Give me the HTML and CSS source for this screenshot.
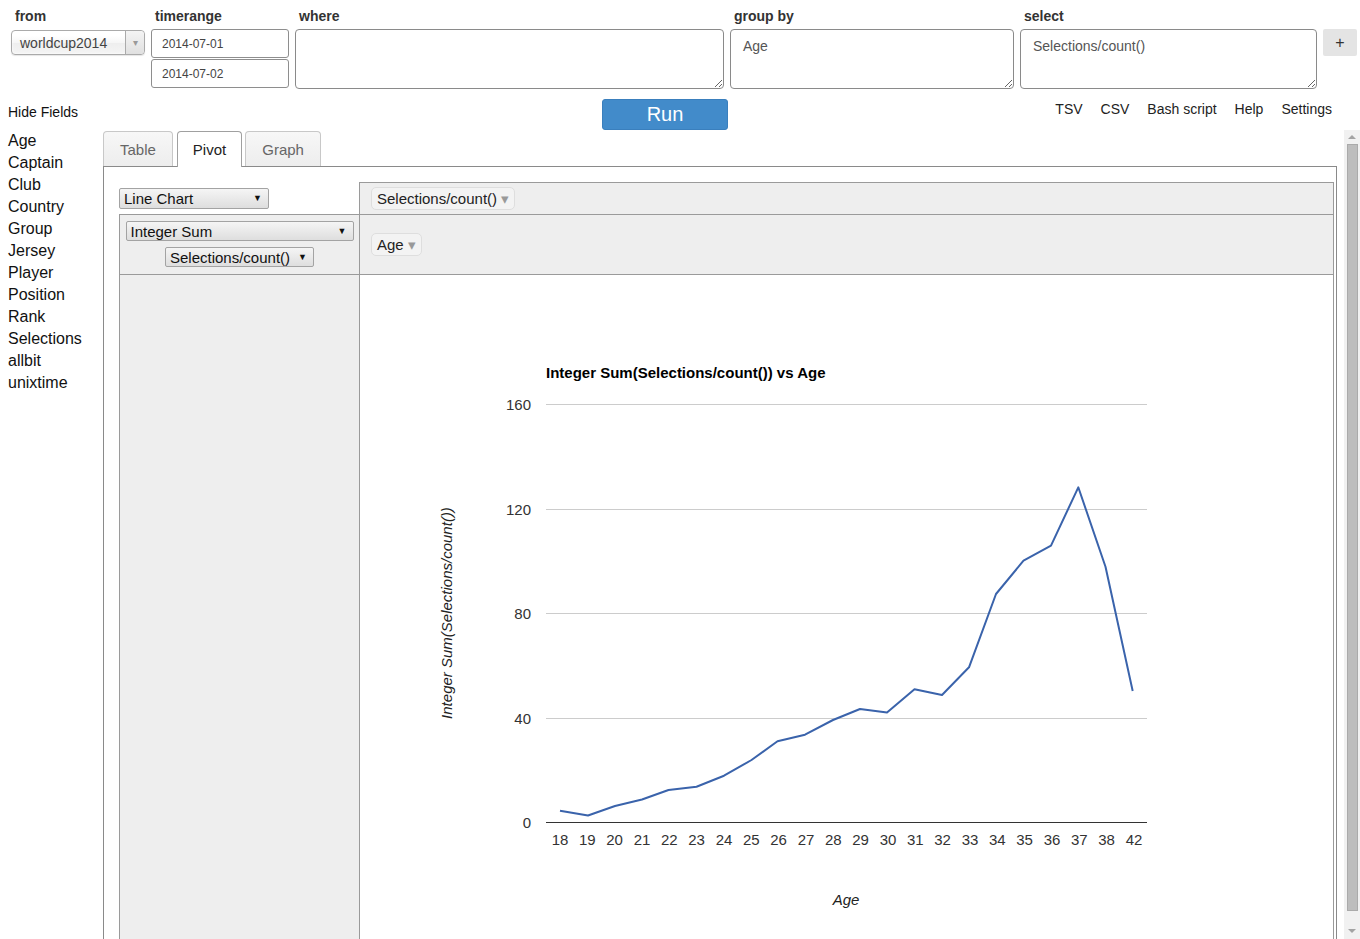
FILE: index.html
```html
<!DOCTYPE html>
<html>
<head>
<meta charset="utf-8">
<title>Query</title>
<link rel="stylesheet" href="styles.css">
</head>
<body>
<div class="page">
  <header class="query">
    <div class="col col-from">
      <div class="lbl">from</div>
      <div class="chosen"><span class="chosen-text">worldcup2014</span><span class="chosen-arrow">&#9662;</span></div>
    </div>
    <div class="col col-time">
      <div class="lbl">timerange</div>
      <input class="inp" type="text" value="2014-07-01">
      <input class="inp inp-2" type="text" value="2014-07-02">
    </div>
    <div class="col col-where">
      <div class="lbl">where</div>
      <textarea class="ta"></textarea>
    </div>
    <div class="col col-group">
      <div class="lbl">group by</div>
      <textarea class="ta">Age</textarea>
    </div>
    <div class="col col-select">
      <div class="lbl">select</div>
      <textarea class="ta">Selections/count()</textarea>
    </div>
    <div class="col col-add">
      <button class="add">+</button>
    </div>
  </header>

  <div class="toolbar">
    <div class="hide-fields">Hide Fields</div>
    <button class="run">Run</button>
    <nav class="links">
      <a>TSV</a><a>CSV</a><a>Bash script</a><a>Help</a><a>Settings</a>
    </nav>
  </div>

  <div class="main">
    <ul class="fields">
      <li>Age</li><li>Captain</li><li>Club</li><li>Country</li><li>Group</li><li>Jersey</li>
      <li>Player</li><li>Position</li><li>Rank</li><li>Selections</li><li>allbit</li><li>unixtime</li>
    </ul>

    <div class="results">
      <div class="tabs">
        <div class="tab">Table</div>
        <div class="tab active">Pivot</div>
        <div class="tab">Graph</div>
      </div>
      <div class="panel">
        <div class="pvt">
          <div class="cell c-renderer">
            <div class="sel sel-renderer"><span>Line Chart</span><span class="sel-arrow">&#9660;</span></div>
          </div>
          <div class="cell c-cols">
            <span class="pill">Selections/count() <span class="tri">&#9662;</span></span>
          </div>
          <div class="cell c-agg">
            <div class="sel sel-agg"><span>Integer Sum</span><span class="sel-arrow">&#9660;</span></div>
            <div class="sel sel-attr"><span>Selections/count()</span><span class="sel-arrow">&#9660;</span></div>
          </div>
          <div class="cell c-rowsaxis">
            <span class="pill">Age <span class="tri">&#9662;</span></span>
          </div>
          <div class="cell c-rows"></div>
          <div class="cell c-output">
            <svg class="chart" width="973" height="700" viewBox="360 275 973 700">
              <text class="c-title" x="546" y="378">Integer Sum(Selections/count()) vs Age</text>
              <g stroke="#cccccc" stroke-width="1">
                <line x1="546" x2="1147" y1="404.5" y2="404.5"/>
                <line x1="546" x2="1147" y1="509.5" y2="509.5"/>
                <line x1="546" x2="1147" y1="613.5" y2="613.5"/>
                <line x1="546" x2="1147" y1="718.5" y2="718.5"/>
              </g>
              <line x1="546" x2="1147" y1="822.5" y2="822.5" stroke="#333333" stroke-width="1"/>
              <g class="c-ytick" text-anchor="end">
                <text x="531" y="409.5">160</text>
                <text x="531" y="514.5">120</text>
                <text x="531" y="618.5">80</text>
                <text x="531" y="723.5">40</text>
                <text x="531" y="827.5">0</text>
              </g>
              <g class="c-xtick" text-anchor="middle">
                <text x="560" y="845">18</text>
                <text x="587.3" y="845">19</text>
                <text x="614.6" y="845">20</text>
                <text x="642" y="845">21</text>
                <text x="669.3" y="845">22</text>
                <text x="696.6" y="845">23</text>
                <text x="724" y="845">24</text>
                <text x="751.3" y="845">25</text>
                <text x="778.6" y="845">26</text>
                <text x="806" y="845">27</text>
                <text x="833.3" y="845">28</text>
                <text x="860.6" y="845">29</text>
                <text x="888" y="845">30</text>
                <text x="915.3" y="845">31</text>
                <text x="942.6" y="845">32</text>
                <text x="970" y="845">33</text>
                <text x="997.3" y="845">34</text>
                <text x="1024.6" y="845">35</text>
                <text x="1052" y="845">36</text>
                <text x="1079.3" y="845">37</text>
                <text x="1106.6" y="845">38</text>
                <text x="1134" y="845">42</text>
              </g>
              <polyline fill="none" stroke="#3a63ab" stroke-width="2" stroke-linejoin="round"
                points="560,810.7 588,815.5 615,806 642,799.5 668.5,790 696.5,786.7 724,775.7 751.5,760 777.5,741.3 805,734.7 833,720 860,709 887,712.5 914.5,689.3 942,695 969,667.3 996,594 1023.5,560.7 1051,545.7 1078.3,487.3 1105.5,566.7 1132.7,691"/>
              <text class="c-axis" x="452" y="613" text-anchor="middle" transform="rotate(-90 452 613)">Integer Sum(Selections/count())</text>
              <text class="c-axis" x="846" y="905" text-anchor="middle">Age</text>
            </svg>
          </div>
        </div>
      </div>
    </div>

    <div class="scrollbar">
      <div class="sb-up"><span class="arr-up"></span></div>
      <div class="sb-thumb"></div>
      <div class="sb-down"><span class="arr-down"></span></div>
    </div>
  </div>
</div>
</body>
</html>
```

FILE: styles.css
```css
html, body {
  margin: 0;
  padding: 0;
  background: #ffffff;
}
body {
  font-family: "Liberation Sans", Arial, sans-serif;
  color: #111;
  width: 1360px;
  height: 939px;
  overflow: hidden;
}
.page {
  display: flex;
  flex-direction: column;
  width: 1360px;
  height: 939px;
}

/* ---------- query header ---------- */
.query {
  display: flex;
  gap: 6px;
  padding: 6px 0 0 11px;
  flex: none;
}
.col { display: flex; flex-direction: column; flex: none; }
.col > * { flex: none; }
.col-from { width: 134px; }
.col-time { width: 138px; }
.col-where { width: 429px; }
.col-group { width: 284px; }
.col-select { width: 297px; }
.col-add { width: 34px; padding-top: 23px; }

.lbl {
  font-weight: bold;
  font-size: 14px;
  line-height: 20px;
  color: #333;
  padding-left: 4px;
  margin-bottom: 3px;
}

.chosen {
  margin-top: 1px;
  height: 25px;
  box-sizing: border-box;
  border: 1px solid #aaa;
  border-radius: 4px;
  background: linear-gradient(#ffffff 20%, #f6f6f6 50%, #eeeeee 52%, #f4f4f4 100%);
  display: flex;
  align-items: center;
  box-shadow: 0 0 3px #fff inset, 0 1px 1px rgba(0,0,0,0.1);
}
.chosen-text {
  flex: 1;
  padding-left: 8px;
  font-size: 14px;
  color: #444;
}
.chosen-arrow {
  width: 18px;
  height: 23px;
  border-left: 1px solid #aaa;
  border-radius: 0 4px 4px 0;
  background: linear-gradient(#f4f4f4, #e0e0e0);
  color: #999;
  font-size: 10px;
  line-height: 23px;
  text-align: center;
}

.inp {
  width: 138px;
  height: 29px;
  box-sizing: border-box;
  margin: 0;
  border: 1px solid #8e8e8e;
  border-radius: 3px;
  padding: 0 10px;
  font-family: "Liberation Sans", Arial, sans-serif;
  font-size: 12px;
  color: #444;
  background: #fff;
  outline: none;
}
.inp-2 { margin-top: 1px; }

.ta {
  width: 100%;
  height: 60px;
  box-sizing: border-box;
  margin: 0;
  border: 1px solid #8a8a8a;
  border-radius: 4px;
  padding: 8px 12px;
  font-family: "Liberation Sans", Arial, sans-serif;
  font-size: 14px;
  color: #555;
  resize: both;
  outline: none;
}

.add {
  width: 34px;
  height: 27px;
  border: none;
  border-radius: 2px;
  background: #e4e4e4;
  font-family: "Liberation Sans", Arial, sans-serif;
  font-size: 16px;
  color: #333;
  padding: 0;
}

/* ---------- toolbar ---------- */
.toolbar {
  display: grid;
  grid-template-columns: 602px 126px 1fr;
  margin-top: 10px;
  height: 31px;
  align-items: start;
  flex: none;
}
.hide-fields {
  padding: 5px 0 0 8px;
  font-size: 14px;
  line-height: 16px;
  color: #111;
}
.run {
  width: 126px;
  height: 31px;
  border: 1px solid #3a7fbd;
  border-radius: 3px;
  background: #428bca;
  color: #fff;
  font-family: "Liberation Sans", Arial, sans-serif;
  font-size: 20px;
  padding: 0;
}
.links {
  display: flex;
  justify-content: flex-end;
  gap: 18px;
  padding: 2px 28px 0 0;
  font-size: 14px;
  line-height: 16px;
}
.links a { color: #222; text-decoration: none; }

/* ---------- main ---------- */
.main {
  display: flex;
  flex: 1;
  min-height: 0;
  width: 1360px;
  overflow: hidden;
}
.fields {
  list-style: none;
  margin: 0;
  padding: 0 0 0 8px;
  width: 103px;
  flex: none;
  box-sizing: border-box;
  font-size: 16px;
  line-height: 22px;
  color: #111;
}
.results {
  width: 1234px;
  flex: none;
  box-sizing: border-box;
  display: flex;
  flex-direction: column;
  padding-top: 1px;
}
.tabs {
  display: flex;
  gap: 3px;
  height: 35px;
  flex: none;
  position: relative;
  z-index: 1;
}
.tab {
  height: 35px;
  box-sizing: border-box;
  padding: 2px 16px 0;
  border: 1px solid #c8c8c8;
  border-bottom: none;
  border-radius: 4px 4px 0 0;
  background: linear-gradient(#f7f7f7, #ededed);
  font-size: 15px;
  line-height: 31px;
  color: #666;
}
.tab:first-child { margin-right: 1px; }
.tab.active {
  height: 36px;
  padding: 2px 15px 0;
  background: #fff;
  border-color: #a0a0a0;
  color: #222;
}
.panel {
  flex: 1;
  border: 1px solid #8a8a8a;
  border-bottom: none;
  padding: 15px 1px 0 15px;
  overflow: hidden;
}

/* ---------- pivot ---------- */
.pvt {
  display: grid;
  grid-template-columns: 240px 975px;
  grid-template-rows: 32px 60px 700px;
}
.cell {
  box-sizing: border-box;
  display: flex;
  align-items: center;
  min-width: 0;
}
.c-renderer { padding: 0; }
.c-cols {
  border: 1px solid #9a9a9a;
  border-bottom: none;
  background: #eeeeee;
  padding-left: 11px;
}
.c-agg {
  border-left: 1px solid #9a9a9a;
  border-top: 1px solid #9a9a9a;
  background: #eeeeee;
  flex-direction: column;
  align-items: center;
  justify-content: flex-start;
  padding-top: 6px;
  gap: 6px;
}
.c-rowsaxis {
  border: 1px solid #9a9a9a;
  border-bottom: none;
  background: #eeeeee;
  padding-left: 11px;
}
.c-rows {
  border-left: 1px solid #9a9a9a;
  border-top: 1px solid #9a9a9a;
  background: #eeeeee;
}
.c-output {
  border: 1px solid #9a9a9a;
  border-bottom: none;
  background: #fff;
  align-items: flex-start;
}

.sel {
  display: flex;
  align-items: center;
  justify-content: space-between;
  box-sizing: border-box;
  border: 1px solid #a3a3a3;
  border-radius: 2px;
  background: linear-gradient(#f5f5f5, #dedede);
  font-size: 15px;
  color: #111;
  padding: 0 6px 0 4px;
}
.sel-arrow { font-size: 9px; color: #111; }
.sel-renderer { width: 150px; height: 21px; }
.sel-agg { width: 228px; height: 20px; }
.sel-attr { width: 149px; height: 20px; }

.pill {
  display: inline-block;
  background: #f3f3f3;
  border: 1px solid #dedede;
  border-radius: 5px;
  padding: 2px 5px;
  font-size: 15px;
  line-height: 17px;
  color: #222;
}
.tri { font-size: 15px; color: #999; }

.chart { display: block; flex: none; }
.c-title { font-family: "Liberation Sans", Arial, sans-serif; font-weight: bold; font-size: 15px; fill: #000; }
.c-ytick text, .c-xtick text { font-family: "Liberation Sans", Arial, sans-serif; font-size: 15px; fill: #333; }
.c-axis { font-family: "Liberation Sans", Arial, sans-serif; font-style: italic; font-size: 15px; fill: #222; }

/* ---------- scrollbar ---------- */
.scrollbar {
  width: 16px;
  flex: none;
  margin-left: 7px;
  margin-top: -1px;
  background: #f1f1f1;
  display: flex;
  flex-direction: column;
  align-items: center;
}
.sb-up { height: 15px; display: flex; align-items: center; justify-content: center; }
.sb-down { height: 28px; display: flex; align-items: flex-end; justify-content: center; padding-bottom: 6px; box-sizing: border-box; }
.arr-up { width: 0; height: 0; border-left: 4px solid transparent; border-right: 4px solid transparent; border-bottom: 4px solid #a3a3a3; }
.arr-down { width: 0; height: 0; border-left: 4px solid transparent; border-right: 4px solid transparent; border-top: 4px solid #a3a3a3; }
.sb-thumb {
  width: 11px;
  margin-left: 1px;
  flex: 1;
  box-sizing: border-box;
  background: #bdbdbd;
  border: 1px solid #aaaaaa;
}
```
